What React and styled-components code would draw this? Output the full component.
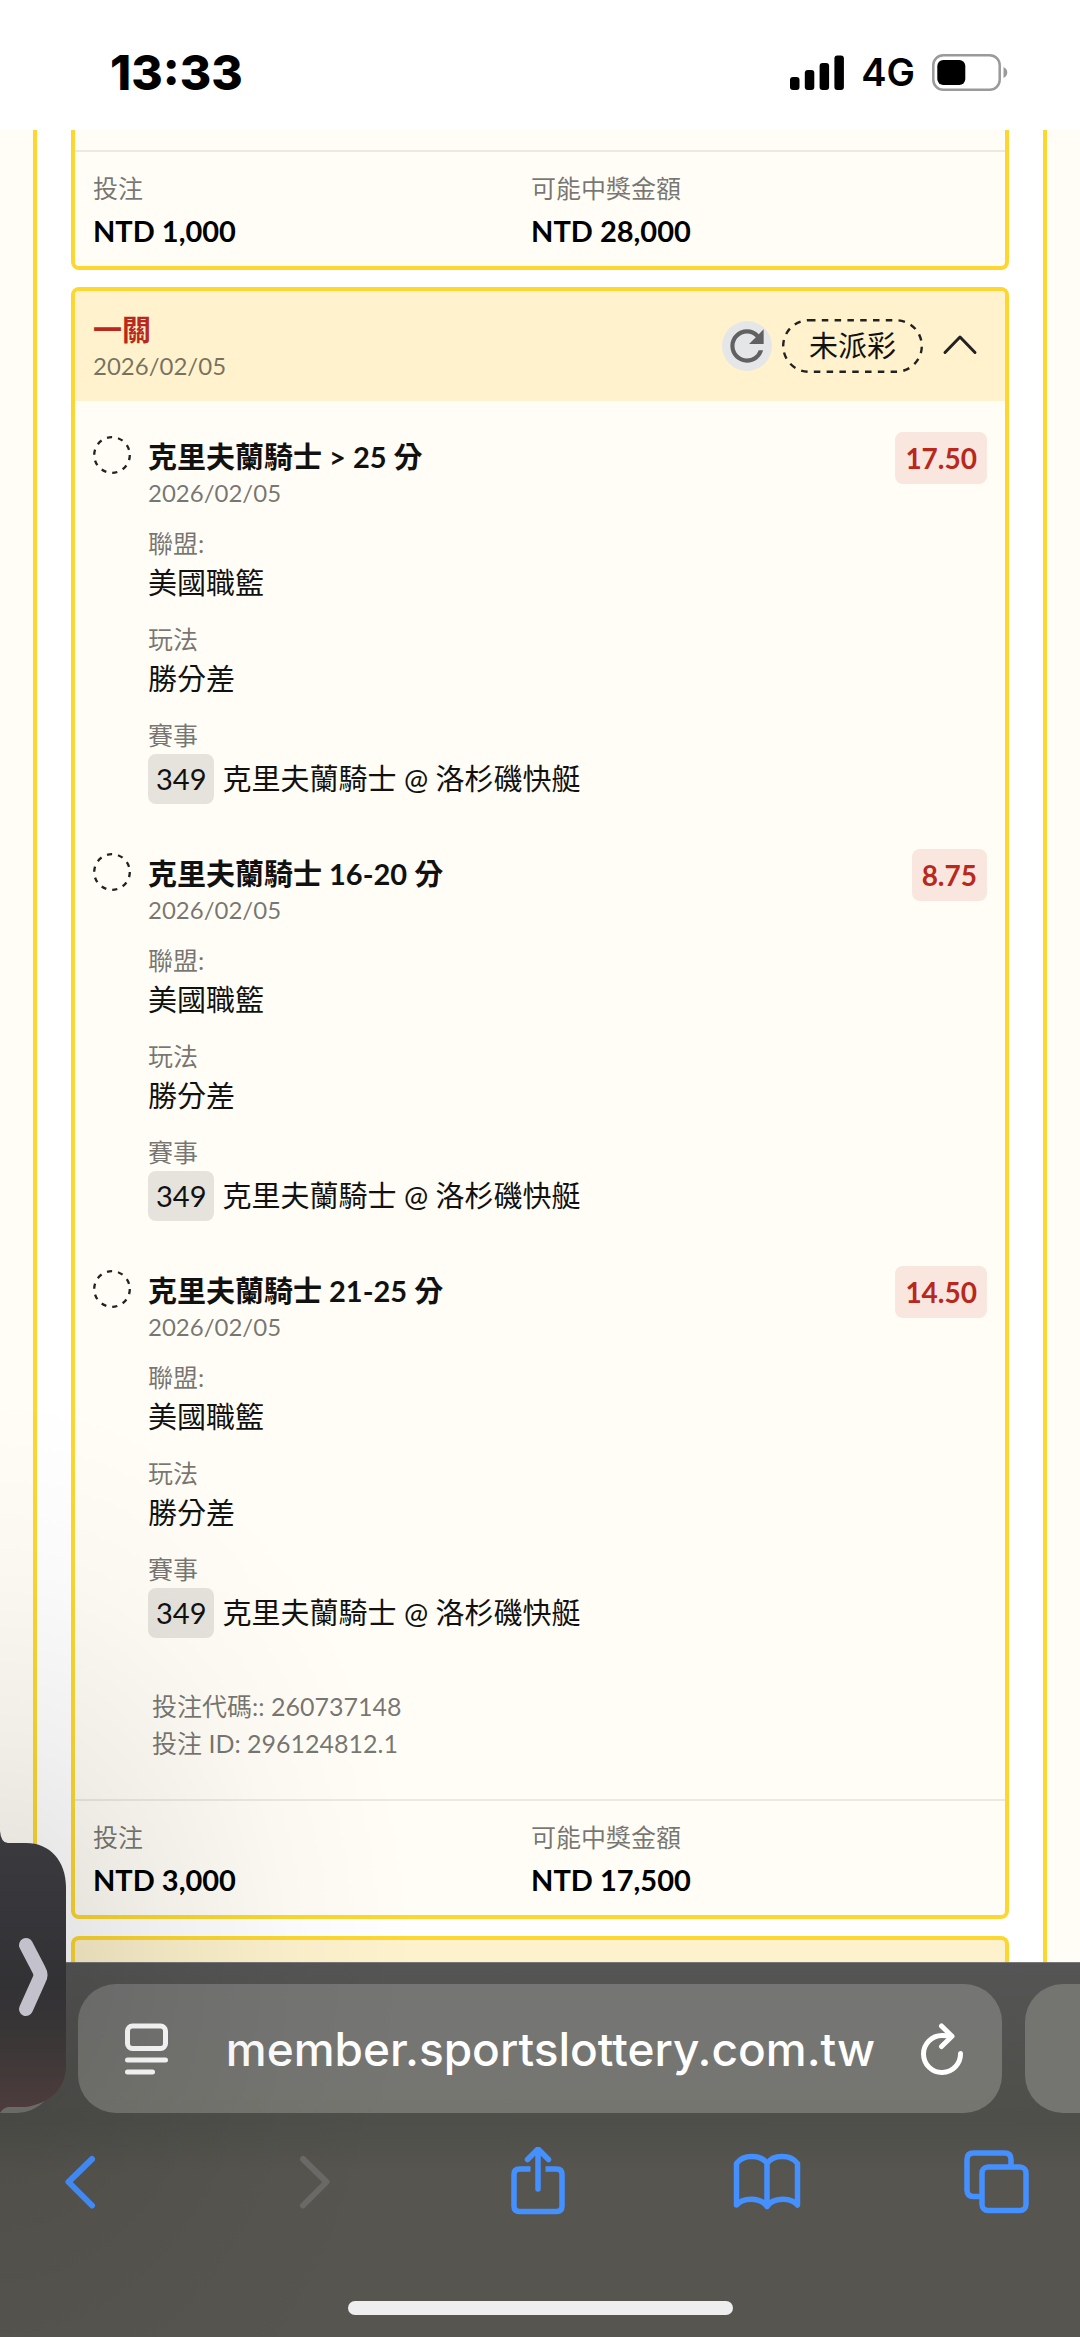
import React from 'react';
import styled, { createGlobalStyle } from 'styled-components';
import { MdRefresh } from 'react-icons/md';

const legs = [
    { id: 1, title: '克里夫蘭騎士 > 25 分', odds: '17.50' },
    { id: 2, title: '克里夫蘭騎士 16-20 分', odds: '8.75' },
    { id: 3, title: '克里夫蘭騎士 21-25 分', odds: '14.50' },
]

function StatusBar(){
    return (
        <Status>
            <Clock>13:33</Clock>
            <StatusIcons>
                <svg width="54" height="35" viewBox="0 0 54 35" fill="#000">
                    <rect x="0" y="22" width="9.5" height="13" rx="3"/>
                    <rect x="14.8" y="15" width="9.5" height="20" rx="3"/>
                    <rect x="29.6" y="8" width="9.5" height="27" rx="3"/>
                    <rect x="44.4" y="0.5" width="9.5" height="34.5" rx="3"/>
                </svg>
                <Network>4G</Network>
                <svg width="76" height="37" viewBox="0 0 76 37">
                    <rect x="1.3" y="1.3" width="66.4" height="34.4" rx="10" fill="none" stroke="#9a9a9a" strokeWidth="2.5"/>
                    <rect x="5.3" y="6" width="28" height="25" rx="6" fill="#000"/>
                    <path d="M71.5 13c5 2 5 9 0 11z" fill="#9a9a9a"/>
                </svg>
            </StatusIcons>
        </Status>
    )
}

function Summary({ stake, payout }){
    return (
        <SummaryGrid>
            <div>
                <Label>投注</Label>
                <Amount>{stake}</Amount>
            </div>
            <div>
                <Label>可能中獎金額</Label>
                <Amount>{payout}</Amount>
            </div>
        </SummaryGrid>
    )
}

function Leg({ title, odds }){
    return (
        <LegRow>
            <PendingIcon viewBox="0 0 38 38">
                <circle cx="19" cy="19" r="17.8" fill="none" stroke="#222" strokeWidth="2.3" strokeDasharray="5.2 5.98"/>
            </PendingIcon>
            <LegMain>
                <LegTitle>{title}</LegTitle>
                <DateText>2026/02/05</DateText>
                <Field>
                    <Label>聯盟:</Label>
                    <Value>美國職籃</Value>
                </Field>
                <Field>
                    <Label>玩法</Label>
                    <Value>勝分差</Value>
                </Field>
                <Field>
                    <Label>賽事</Label>
                    <Match>
                        <MatchCode>349</MatchCode>
                        克里夫蘭騎士 @ 洛杉磯快艇
                    </Match>
                </Field>
            </LegMain>
            <Odds>{odds}</Odds>
        </LegRow>
    )
}

function BrowserBar(){
    return (
        <Browser>
            <Tabs>
                <TabPeek $side="left"/>
                <AddressBar>
                    <IconButton aria-label="Page menu">
                        <svg width="46" height="52" viewBox="0 0 46 52" fill="none" stroke="#fff" strokeWidth="5" strokeLinecap="round">
                            <rect x="3.5" y="3" width="38" height="22.5" rx="5"/>
                            <path d="M3.5 37h38M3.5 49h25"/>
                        </svg>
                    </IconButton>
                    <Address type="text" aria-label="Address" readOnly value="member.sportslottery.com.tw"/>
                    <IconButton aria-label="Reload">
                        <svg width="46" height="52" viewBox="0 0 46 52" fill="none" stroke="#fff" strokeWidth="5" strokeLinecap="round" strokeLinejoin="round">
                            <path d="M41.5 30.5A18.5 18.5 0 1 1 23 12.5q5 0 9 .5"/>
                            <path d="M22.5 3l10.5 10.3L22.5 23.5"/>
                        </svg>
                    </IconButton>
                </AddressBar>
                <TabPeek $side="right"/>
            </Tabs>
            <Toolbar>
                <IconButton aria-label="Back">
                    <svg width="70" height="70" viewBox="0 0 70 70" fill="none" stroke="#4590ff" strokeWidth="6" strokeLinecap="round" strokeLinejoin="round">
                        <path d="M47 12L23.5 35L47 58.5"/>
                    </svg>
                </IconButton>
                <IconButton aria-label="Forward" disabled>
                    <svg width="70" height="70" viewBox="0 0 70 70" fill="none" stroke="#6b6a66" strokeWidth="6" strokeLinecap="round" strokeLinejoin="round">
                        <path d="M29 12L52.5 35L29 58.5"/>
                    </svg>
                </IconButton>
                <IconButton aria-label="Share">
                    <svg width="70" height="70" viewBox="0 0 70 70" fill="none" stroke="#4590ff" strokeWidth="5.5" strokeLinecap="round" strokeLinejoin="round">
                        <path d="M35 42V3M24.5 12.5L35 2L45.5 12.5"/>
                        <path strokeLinecap="butt" d="M27.5 22H16.5q-5.5 0-5.5 5.5V59q0 5.5 5.5 5.5h37q5.5 0 5.5-5.5V27.5q0-5.5-5.5-5.5H42.5"/>
                    </svg>
                </IconButton>
                <IconButton aria-label="Bookmarks">
                    <svg width="70" height="70" viewBox="0 0 70 70" fill="none" stroke="#4590ff" strokeWidth="5.5" strokeLinecap="round" strokeLinejoin="round">
                        <path d="M35 16.5C29 7 11 7 4.5 16.5V58C11 50 29 50 35 59.5C41 50 59 50 65.5 58V16.5C59 7 41 7 35 16.5V59.5"/>
                    </svg>
                </IconButton>
                <IconButton aria-label="Tabs">
                    <svg width="70" height="70" viewBox="0 0 70 70" fill="none" stroke="#4590ff" strokeWidth="5.5">
                        <rect x="21" y="20" width="44" height="43.5" rx="6"/>
                        <path d="M21 49.5H12.5q-6.5 0-6.5-6.5V12.5Q6 6 12.5 6h31Q50 6 50 12.5V20"/>
                    </svg>
                </IconButton>
            </Toolbar>
            <HomeIndicator/>
        </Browser>
    )
}

function App(){
    return (
        <Screen>
            <GlobalStyle/>
            <StatusBar/>
            <Page>
                <Panel>
                    <Card $part="end">
                        <Spacer/>
                        <Summary stake="NTD 1,000" payout="NTD 28,000"/>
                    </Card>
                    <Card>
                        <CardHeader>
                            <HeaderText>
                                <CardTitle>一關</CardTitle>
                                <DateText>2026/02/05</DateText>
                            </HeaderText>
                            <RefreshButton aria-label="重新整理">
                                <MdRefresh size={50}/>
                            </RefreshButton>
                            <StatusPill>
                                <svg width="141" height="54" viewBox="0 0 141 54">
                                    <rect x="1.2" y="1.2" width="138.6" height="51.6" rx="25.8" fill="none" stroke="#222" strokeWidth="2.4" strokeDasharray="6.5 6.3"/>
                                </svg>
                                未派彩
                            </StatusPill>
                            <IconButton aria-label="收合">
                                <svg width="54" height="54" viewBox="0 0 54 54" fill="none" stroke="#222" strokeWidth="3" strokeLinecap="round" strokeLinejoin="round">
                                    <path d="M12 33.5L27 18L42 33.5"/>
                                </svg>
                            </IconButton>
                        </CardHeader>
                        <Legs>
                            {
                                legs.map(leg => (
                                    <Leg key={leg.id} title={leg.title} odds={leg.odds}/>
                                ))
                            }
                        </Legs>
                        <Codes>
                            <div>投注代碼:: 260737148</div>
                            <div>投注 ID: 296124812.1</div>
                        </Codes>
                        <Summary stake="NTD 3,000" payout="NTD 17,500"/>
                    </Card>
                    <Card $part="start"/>
                </Panel>
            </Page>
            <BrowserBar/>
            <Handle aria-label="Show">
                <svg width="67" height="282" viewBox="0 0 67 282">
                    <defs>
                        <linearGradient id="handle" x1="0" y1="0" x2="0" y2="1">
                            <stop offset="0" stopColor="#3b3a3f"/>
                            <stop offset="0.55" stopColor="#323134"/>
                            <stop offset="0.75" stopColor="#3b3737"/>
                            <stop offset="1" stopColor="#4e3c3d"/>
                        </linearGradient>
                    </defs>
                    <path fill="url(#handle)" d="M0 0Q1 12 8 12H26C50 12 66 30 66 56V234C66 258 50 272 26 276H8Q3 277 0 282z"/>
                    <path d="M26 114L39 139Q42 144 39 149L26 178" fill="none" stroke="#c3c1cb" strokeWidth="14" strokeLinecap="round" strokeLinejoin="round"/>
                </svg>
            </Handle>
        </Screen>
    )
}

export default App


const GlobalStyle = createGlobalStyle`
    * {
        box-sizing: border-box;
    }
    body {
        margin: 0;
        background: #fff;
        color: #111;
        font-family: Lato, 'Noto Sans CJK TC', sans-serif;
        font-size: 29px;
    }
    button {
        border: 0;
        padding: 0;
        background: none;
    }
    svg {
        display: block;
    }
`

const Screen = styled.div`
    position: relative;
    display: flex;
    flex-direction: column;
    min-height: 100vh;
    overflow: hidden;
`

const Status = styled.header`
    display: flex;
    justify-content: space-between;
    align-items: center;
    height: 130px;
    padding: 14px 72px 0 110px;
    background: #fff;
    color: #000;
    font-family: Inter, sans-serif;
`

const Clock = styled.div`
    font-size: 48px;
    font-weight: 800;
`

const StatusIcons = styled.div`
    display: flex;
    align-items: center;
    gap: 17px;
`

const Network = styled.div`
    font-size: 38px;
    font-weight: 600;
`

const Page = styled.main`
    flex: 1;
    display: flex;
    padding: 0 33px;
    background: #fffdf5;
`

const Panel = styled.div`
    flex: 1;
    display: flex;
    flex-direction: column;
    gap: 17px;
    padding: 0 34px;
    border: solid #fdd72f;
    border-width: 0 4px;
    background: #fff;
`

const Card = styled.section`
    overflow: hidden;
    border: 4px solid #fdd72f;
    border-radius: 8px;
    background: #fffdf5;
    ${props => props.$part === 'end' && `
        border-top: 0;
        border-radius: 0 0 8px 8px;
    `}
    ${props => props.$part === 'start' && `
        flex: 1;
        min-height: 26px;
        border-bottom: 0;
        border-radius: 8px 8px 0 0;
        background: #fdf2cc;
    `}
`

const Spacer = styled.div`
    height: 20px;
`

const CardHeader = styled.div`
    display: flex;
    align-items: center;
    gap: 10px;
    height: 110px;
    padding: 0 18px;
    background: #fff2cc;
`

const HeaderText = styled.div`
    flex: 1;
`

const CardTitle = styled.h2`
    margin: 0;
    color: #b9281c;
    font-size: 29px;
    font-weight: 700;
    line-height: 42px;
`

const DateText = styled.div`
    padding-bottom: 2px;
    color: rgba(0, 0, 0, 0.55);
    font-size: 24px;
    line-height: 30px;
`

const RefreshButton = styled.button`
    display: flex;
    width: 50px;
    height: 50px;
    border-radius: 50%;
    && {
        background: #e5e6e8;
    }
    color: #616161;
`

const StatusPill = styled.div`
    position: relative;
    width: 141px;
    text-align: center;
    line-height: 54px;

    svg {
        position: absolute;
        inset: 0;
    }
`

const IconButton = styled.button`
    display: flex;
    flex: none;
`

const Legs = styled.div`
    display: flex;
    flex-direction: column;
    gap: 45px;
    padding: 31px 18px 0;
`

const LegRow = styled.article`
    display: flex;
    align-items: flex-start;
`

const PendingIcon = styled.svg`
    flex: none;
    width: 38px;
    height: 38px;
    margin: 4px 17px 0 0;
`

const LegMain = styled.div`
    flex: 1;
    padding-top: 4px;
`

const LegTitle = styled.h3`
    margin: 0;
    font-size: 29px;
    font-weight: 700;
    line-height: 42px;
`

const Field = styled.div`
    margin-top: 16px;
`

const Label = styled.div`
    color: rgba(0, 0, 0, 0.55);
    font-size: 25px;
    line-height: 34px;
`

const Value = styled.div`
    line-height: 46px;
`

const Match = styled.div`
    display: flex;
    align-items: center;
    gap: 8px;
    padding-top: 2px;
    line-height: 50px;
`

const MatchCode = styled.span`
    padding: 0 8px;
    border-radius: 8px;
    background: #e6e3dd;
`

const Odds = styled.div`
    padding: 0 10px;
    border-radius: 8px;
    background: #f8e6df;
    color: #b9281c;
    font-size: 28px;
    font-weight: 700;
    line-height: 52px;
`

const Codes = styled.div`
    padding: 50px 77px 37px;
    color: rgba(0, 0, 0, 0.55);
    font-size: 25px;
    line-height: 37px;
`

const SummaryGrid = styled.div`
    display: grid;
    grid-template-columns: 49% 1fr;
    padding: 19px 18px 9px;
    border-top: 2px solid #ebe9e2;
`

const Amount = styled.div`
    color: #000;
    font-weight: 700;
    line-height: 52px;
`

const Browser = styled.footer`
    border-top: 1px solid #777;
    background: linear-gradient(#555, #4e4e4a 42%, #56554f 56%, #56554f);
`

const Tabs = styled.div`
    display: grid;
    grid-template-columns: 55px 1fr 55px;
    gap: 23px;
    padding-top: 21px;
`

const TabPeek = styled.div`
    height: 129px;
    border-radius: ${props => props.$side === 'left' ? '0 38px 38px 0' : '38px 0 0 38px'};
    background: #747471;
`

const AddressBar = styled.div`
    display: flex;
    align-items: center;
    height: 129px;
    padding: 0 37px 0 46px;
    border-radius: 38px;
    background: linear-gradient(#757575, #757570);
`

const Address = styled.input`
    flex: 1;
    min-width: 0;
    border: 0;
    padding: 0 0 0 12px;
    background: none;
    color: #fff;
    font-family: Inter, sans-serif;
    font-size: 46px;
    font-weight: 500;
    text-align: center;
    outline: none;
`

const Toolbar = styled.nav`
    display: flex;
    justify-content: space-between;
    padding: 34px 49px 0 45px;
`

const HomeIndicator = styled.div`
    width: 385px;
    height: 14px;
    margin: 84px auto 22px;
    border-radius: 7px;
    background: #eee;
`

const Handle = styled.button`
    position: absolute;
    left: 0;
    bottom: 224px;

    /* soft shade cast around the tab */
    &::before {
        content: '';
        position: absolute;
        left: 0;
        top: -460px;
        width: 460px;
        height: 1200px;
        background: radial-gradient(ellipse 420px 580px at 0 600px, rgba(0, 0, 0, 0.13), rgba(0, 0, 0, 0.06) 40%, rgba(0, 0, 0, 0.02) 70%, transparent);
        pointer-events: none;
    }

    svg {
        position: relative;
    }
`
